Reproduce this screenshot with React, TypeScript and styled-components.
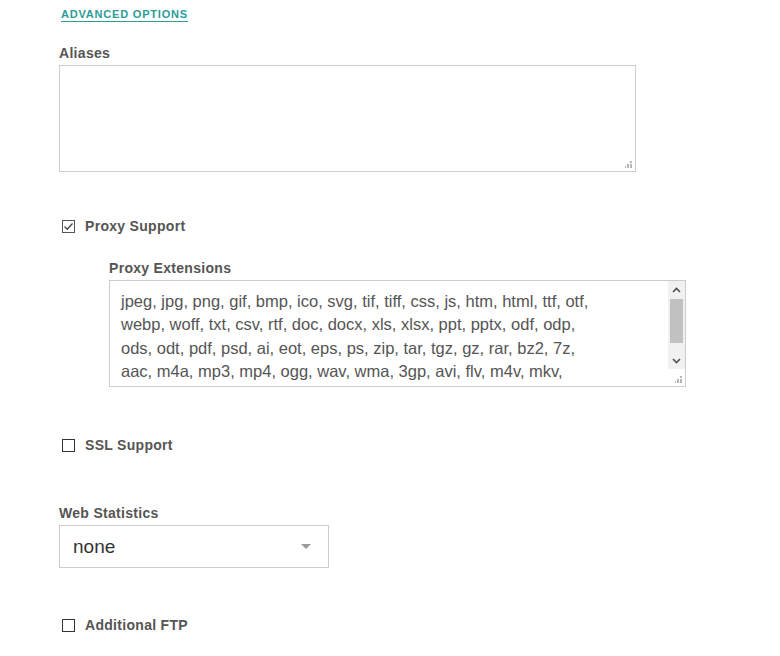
import React from "react";
import styled, { createGlobalStyle } from "styled-components";

const Global = createGlobalStyle`
  html, body { margin: 0; padding: 0; background: #fff; }
  body { font-family: "Liberation Sans", Arial, sans-serif; color: #555; }
`;

const Page = styled.div`
  padding: 4px 0 0 59px;
  width: 780px;
  height: 656px;
  box-sizing: border-box;
  overflow: hidden;
`;

const AdvancedLink = styled.a`
  display: inline-block;
  margin-left: 2px;
  font-size: 11px;
  line-height: 13px;
  font-weight: bold;
  letter-spacing: 0.8px;
  color: #2a9d99;
  text-decoration: none;
  border-bottom: 1px solid #2a9d99;
`;

const Field = styled.div<{ $top: number; $indent?: number }>`
  margin-top: ${(p) => p.$top}px;
  margin-left: ${(p) => p.$indent ?? 0}px;
`;

const Label = styled.div`
  font-size: 14px;
  line-height: 16px;
  font-weight: bold;
  letter-spacing: 0.3px;
  color: #555;
  margin-bottom: 4px;
`;

const Box = styled.div<{ $w: number; $h: number }>`
  position: relative;
  display: flex;
  width: ${(p) => p.$w}px;
  height: ${(p) => p.$h}px;
  border: 1px solid #ccc;
  box-sizing: border-box;
  background: #fff;
`;

const Area = styled.textarea`
  flex: 1;
  border: none;
  outline: none;
  resize: none;
  overflow: hidden;
  margin: 0;
  padding: 9px 74px 0 11px;
  font-family: "Liberation Sans", Arial, sans-serif;
  font-size: 16.5px;
  line-height: 23.3px;
  color: #555;
  background: transparent;
`;

const ScrollCol = styled.div`
  width: 17px;
  display: flex;
  flex-direction: column;
  background: #f1f1f1;
  margin-bottom: 17px;
`;

const ScrollBtn = styled.div`
  height: 17px;
  display: flex;
  align-items: center;
  justify-content: center;
`;

const Thumb = styled.div`
  height: 44px;
  margin: 0 2px;
  background: #c1c1c1;
`;

const Track = styled.div`
  flex: 1;
  display: flex;
  flex-direction: column;
  padding-top: 1px;
`;

const GripWrap = styled.div`
  position: absolute;
  right: 3px;
  bottom: 3px;
  width: 7px;
  height: 7px;
  line-height: 0;
`;

const Grip = () => (
  <GripWrap>
    <svg width="7" height="7" viewBox="0 0 7 7">
      <rect x="5" y="0" width="2" height="2" fill="#b5b5b5" />
      <rect x="2" y="3" width="2" height="2" fill="#b5b5b5" />
      <rect x="5" y="3" width="2" height="2" fill="#b5b5b5" />
      <rect x="-1" y="5" width="2" height="2" fill="#b5b5b5" />
      <rect x="2" y="5" width="2" height="2" fill="#b5b5b5" />
      <rect x="5" y="5" width="2" height="2" fill="#b5b5b5" />
    </svg>
  </GripWrap>
);

const CheckRow = styled.label<{ $top: number }>`
  display: flex;
  align-items: center;
  margin-top: ${(p) => p.$top}px;
  margin-left: 3px;
  gap: 10px;
  font-size: 14px;
  font-weight: bold;
  letter-spacing: 0.3px;
  color: #555;
  line-height: 16px;
`;

const CheckBox = styled.span<{ $checked?: boolean }>`
  width: 13px;
  height: 13px;
  box-sizing: border-box;
  border: 1px solid ${(p) => (p.$checked ? "#555" : "#333")};
  background: #fff;
  display: flex;
  align-items: center;
  justify-content: center;
`;

const Select = styled.div`
  width: 270px;
  height: 43px;
  box-sizing: border-box;
  border: 1px solid #ccc;
  display: flex;
  align-items: center;
  justify-content: space-between;
  padding: 0 17px 0 13px;
  font-size: 19px;
  color: #333;
`;

const Caret = styled.span`
  width: 0;
  height: 0;
  border-left: 5px solid transparent;
  border-right: 5px solid transparent;
  border-top: 5px solid #999;
`;

const extensions =
  "jpeg, jpg, png, gif, bmp, ico, svg, tif, tiff, css, js, htm, html, ttf, otf, webp, woff, txt, csv, rtf, doc, docx, xls, xlsx, ppt, pptx, odf, odp, ods, odt, pdf, psd, ai, eot, eps, ps, zip, tar, tgz, gz, rar, bz2, 7z, aac, m4a, mp3, mp4, ogg, wav, wma, 3gp, avi, flv, m4v, mkv, mov, mpeg, mpg, wmv, apk, exe, swf";

export default function App() {
  return (
    <Page>
      <Global />
      <AdvancedLink href="#">ADVANCED OPTIONS</AdvancedLink>

      <Field $top={23}>
        <Label>Aliases</Label>
        <Box $w={577} $h={107}>
          <Area defaultValue="" />
          <Grip />
        </Box>
      </Field>

      <CheckRow $top={46}>
        <CheckBox $checked>
          <svg width="11" height="11" viewBox="0 0 11 11">
            <path d="M1.5 5.5 L4.2 8.2 L9.5 2.5" fill="none" stroke="#444" strokeWidth="1.3" />
          </svg>
        </CheckBox>
        Proxy Support
      </CheckRow>

      <Field $top={26} $indent={50}>
        <Label>Proxy Extensions</Label>
        <Box $w={577} $h={107}>
          <Area defaultValue={extensions} />
          <ScrollCol>
            <ScrollBtn>
              <svg width="9" height="6" viewBox="0 0 9 6">
                <path d="M1 5 L4.5 1.5 L8 5" fill="none" stroke="#505050" strokeWidth="1.6" />
              </svg>
            </ScrollBtn>
            <Track>
              <Thumb />
            </Track>
            <ScrollBtn>
              <svg width="9" height="6" viewBox="0 0 9 6">
                <path d="M1 1 L4.5 4.5 L8 1" fill="none" stroke="#505050" strokeWidth="1.6" />
              </svg>
            </ScrollBtn>
          </ScrollCol>
          <Grip />
        </Box>
      </Field>

      <CheckRow $top={50}>
        <CheckBox />
        SSL Support
      </CheckRow>

      <Field $top={52}>
        <Label>Web Statistics</Label>
        <Select>
          none
          <Caret />
        </Select>
      </Field>

      <CheckRow $top={49}>
        <CheckBox />
        Additional FTP
      </CheckRow>
    </Page>
  );
}
